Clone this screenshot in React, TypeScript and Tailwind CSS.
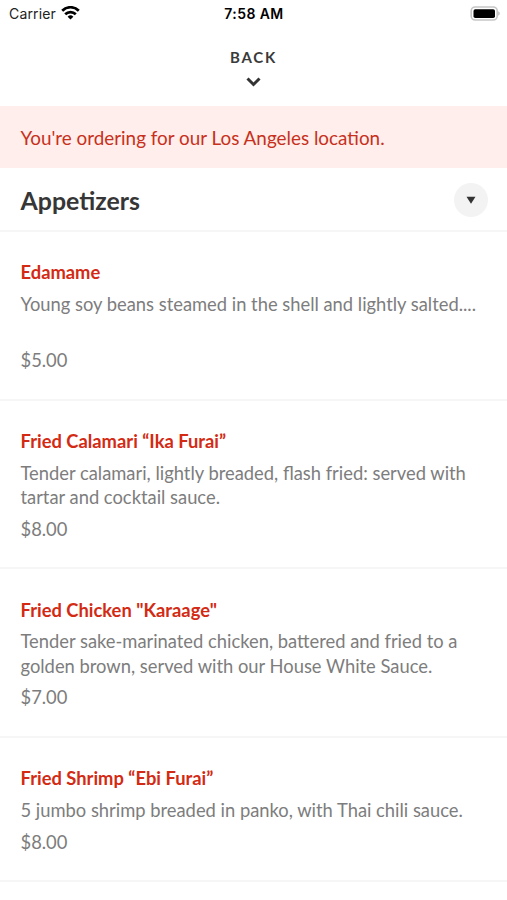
const items = [
  { name: 'Edamame', lines: ['Young soy beans steamed in the shell and lightly salted....', ''], price: '$5.00' },
  { name: 'Fried Calamari “Ika Furai”', lines: ['Tender calamari, lightly breaded, flash fried: served with', 'tartar and cocktail sauce.'], price: '$8.00' },
  { name: 'Fried Chicken "Karaage"', lines: ['Tender sake-marinated chicken, battered and fried to a', 'golden brown, served with our House White Sauce.'], price: '$7.00' },
  { name: 'Fried Shrimp “Ebi Furai”', lines: ['5 jumbo shrimp breaded in panko, with Thai chili sauce.'], price: '$8.00' },
];

export default function App() {
  return (
    <div className="flex h-[900px] w-[507px] flex-col overflow-hidden bg-white font-['Lato',sans-serif]">
      <header className="flex h-[106px] shrink-0 flex-col">
        <div className="grid h-[27px] grid-cols-3 items-center pl-[9px] pr-[7px] font-['Inter',sans-serif] text-[14px] text-black">
          <div className="flex items-center gap-[5px]">
            <span className="tracking-[0.15px] text-[#222]">Carrier</span>
            <svg className="-mt-[1px]" width="19" height="14" viewBox="0 0 19 14" fill="none" stroke="#000" strokeWidth="2.7">
              <path d="M1.2 4.700a11.700 11.700 0 0 1 16.600 0M4.200 8.300a7.600 7.600 0 0 1 10.600 0" />
              <path d="M9.500 13.600 6.600 10.700a4.200 4.200 0 0 1 5.800 0Z" fill="#000" stroke="none" />
            </svg>
          </div>
          <span className="-ml-[1px] whitespace-nowrap text-center font-semibold tracking-[0.4px]">7:58 AM</span>
          <svg className="-mt-[1px] justify-self-end" width="30" height="15" viewBox="0 0 30 15">
            <rect x="1.2" y="1" width="26" height="13" rx="4" fill="none" stroke="#c6c6c6" strokeWidth="1.6" />
            <rect x="3.5" y="3.2" width="21.5" height="8.8" rx="1.8" />
            <path d="M28.2 5.300v4.400c2-.8 2-3.600 0-4.400Z" fill="#bbb" />
          </svg>
        </div>
        <button className="flex flex-col items-center pt-[20px] text-[15px] font-bold leading-5 tracking-[1.7px] text-[#3a3a3a]">
          <span>BACK</span>
          <svg className="mr-[1px] mt-[9px]" width="15" height="12" viewBox="0 0 15 12" fill="none" stroke="#333" strokeWidth="3">
            <path d="m1.500 2.500 6 6 6-6" />
          </svg>
        </button>
      </header>
      <p className="flex h-[62px] shrink-0 items-center bg-[#ffeeeb] px-[20.5px] pt-[2px] text-[18.87px] text-[#c7301c]">You're ordering for our Los Angeles location.</p>
      <div className="flex h-[64px] shrink-0 items-center justify-between border-b-2 border-[#f6f6f6] pl-[20.5px] pr-[19px] pt-[2px]">
        <h1 className="pt-[1px] text-[24.9px] font-bold text-[#363636]">Appetizers</h1>
        <button className="grid size-[34px] place-items-center rounded-full bg-[#f3f3f3]">
          <svg width="10" height="8" viewBox="0 0 10 8"><path d="M.5.7h9L5 7.700Z" fill="#333" /></svg>
        </button>
      </div>
      {items.map((item) => (
        <article key={item.name} className="shrink-0 border-b-2 border-[#f6f6f6] px-[20.5px] pb-[26.2px] pt-[28.3px] text-[18.35px] leading-[24.5px] text-[#7d7d7d]">
          <h2 className="text-[18.35px] font-bold text-[#d32a14]">{item.name}</h2>
          <div className="mt-[7.1px]">
            {item.lines.map((line) => <p key={line} className="h-[24.5px] whitespace-nowrap">{line}</p>)}
          </div>
          <p className="mt-[7.1px]">{item.price}</p>
        </article>
      ))}
    </div>
  );
}
